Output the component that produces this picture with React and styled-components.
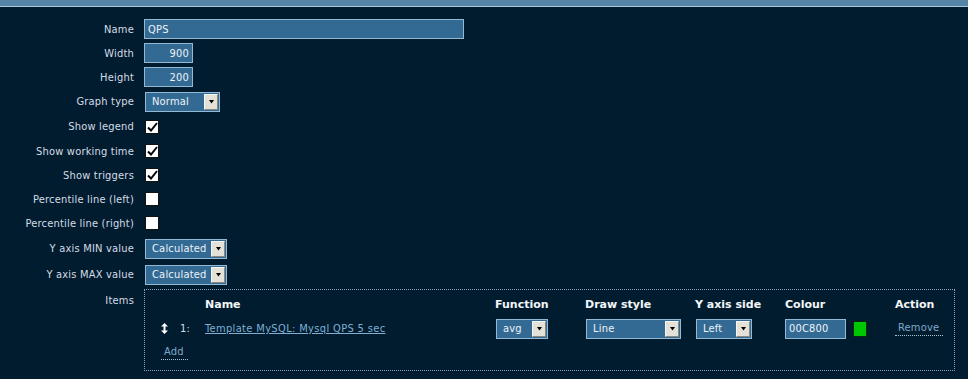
import styled, { createGlobalStyle } from "styled-components";

const GlobalStyle = createGlobalStyle`
  html, body {
    margin: 0;
    padding: 0;
    background: #021c2f;
  }
  body {
    font-family: "DejaVu Sans Condensed", "DejaVu Sans", Verdana, sans-serif;
    font-size: 11px;
    letter-spacing: 0.2px;
    color: #d3dde6;
  }
`;

const TopBar = styled.div`
  height: 6px;
  background: #5684a7;
  border-bottom: 1px solid #a7c9df;
`;

const Form = styled.div`
  display: flex;
  flex-direction: column;
  padding-top: 10px;
`;

const Row = styled.div`
  display: grid;
  grid-template-columns: 134px 1fr;
  column-gap: 10px;
  height: ${(p) => p.h || 24}px;
  align-items: ${(p) => (p.top ? "start" : "center")};
`;

const Label = styled.div`
  text-align: right;
  white-space: nowrap;
  padding-top: ${(p) => (p.top ? "7px" : "0")};
`;

const TextInput = styled.div`
  box-sizing: border-box;
  width: ${(p) => p.w}px;
  height: 20px;
  padding: 0 3px;
  display: flex;
  align-items: center;
  justify-content: ${(p) => (p.right ? "flex-end" : "flex-start")};
  background: #336a93;
  border: 1px solid #93b9d4;
  color: #eef3f7;
`;

const SelectBox = styled.div`
  box-sizing: border-box;
  width: ${(p) => p.w}px;
  height: 20px;
  margin-left: 1px;
  display: flex;
  align-items: center;
  background: #336a93;
  border: 1px solid #93b9d4;
  color: #eef3f7;
`;

const SelectText = styled.span`
  flex: 1;
  padding-left: 6px;
  white-space: nowrap;
`;

const SelectButton = styled.span`
  width: 14px;
  height: 16px;
  margin-right: 1px;
  display: flex;
  align-items: center;
  justify-content: center;
  background: #e4e1d9;
  border-left: 1px solid #f6f5f1;
  border-top: 1px solid #f6f5f1;
  border-right: 1px solid #8a877f;
  border-bottom: 1px solid #8a877f;
  box-sizing: border-box;
`;

const Check = styled.div`
  box-sizing: border-box;
  width: 14px;
  height: 14px;
  margin-left: 1px;
  background: #fff;
  border: 1px solid #111;
  display: flex;
  align-items: center;
  justify-content: center;
`;

const Items = styled.div`
  box-sizing: border-box;
  width: 811px;
  height: 82px;
  margin-top: 2px;
  border: 1px dotted #8aa3b8;
  padding-left: 16px;
`;

const ItemGrid = styled.div`
  display: grid;
  grid-template-columns: 19px 25px 290px 90px 110px 90px 110px 1fr;
  grid-template-rows: 27px 23px 24px;
  align-items: center;
`;

const Head = styled.div`
  font-family: "DejaVu Sans", Verdana, sans-serif;
  font-weight: bold;
  letter-spacing: 0;
  color: #f2f6f9;
  grid-column: ${(p) => p.col};
  padding-top: 2px;
`;

const Cell = styled.div`
  display: flex;
  align-items: center;
  white-space: nowrap;
  grid-column: ${(p) => p.col || "auto"};
`;

const ItemLink = styled.a`
  color: #7fb0d4;
  text-decoration: underline;
  letter-spacing: 0.35px;
`;

const DottedLink = styled.span`
  color: #7fa9c8;
  border-bottom: 1px dotted #a9c4d8;
  padding: 0 4px 1px 3px;
`;

const Swatch = styled.span`
  width: 12px;
  height: 14px;
  margin-left: 7px;
  background: #00c800;
  border: 1px solid #0a2a10;
`;

function Arrow() {
  return (
    <svg width="5" height="4" viewBox="0 0 5 4">
      <path d="M0 0h5L2.5 3.5z" fill="#000" />
    </svg>
  );
}

function Select({ w, value }) {
  return (
    <SelectBox w={w}>
      <SelectText>{value}</SelectText>
      <SelectButton>
        <Arrow />
      </SelectButton>
    </SelectBox>
  );
}

function Checkbox({ checked }) {
  return (
    <Check>
      {checked && (
        <svg width="11" height="10" viewBox="0 0 11 10">
          <path d="M1 5.5l3 3L10 1" fill="none" stroke="#000" strokeWidth="2" />
        </svg>
      )}
    </Check>
  );
}

function MoveIcon() {
  return (
    <svg width="7" height="11" viewBox="0 0 7 11">
      <path d="M3.5 0L7 3.5H4.5v4H7L3.5 11 0 7.5h2.5v-4H0z" fill="#fff" />
    </svg>
  );
}

const checkRows = [
  ["Show legend", true, 25],
  ["Show working time", true, 24],
  ["Show triggers", true, 24],
  ["Percentile line (left)", false, 24],
  ["Percentile line (right)", false, 24],
];

export default function App() {
  return (
    <>
      <GlobalStyle />
      <TopBar />
      <Form>
        <Row>
          <Label>Name</Label>
          <TextInput w={320}>QPS</TextInput>
        </Row>
        <Row>
          <Label>Width</Label>
          <TextInput w={49} right>900</TextInput>
        </Row>
        <Row>
          <Label>Height</Label>
          <TextInput w={49} right>200</TextInput>
        </Row>
        <Row h={25}>
          <Label>Graph type</Label>
          <Select w={75} value="Normal" />
        </Row>
        {checkRows.map(([label, checked, h]) => (
          <Row key={label} h={h}>
            <Label>{label}</Label>
            <Checkbox checked={checked} />
          </Row>
        ))}
        <Row h={27}>
          <Label>Y axis MIN value</Label>
          <Select w={82} value="Calculated" />
        </Row>
        <Row h={25}>
          <Label>Y axis MAX value</Label>
          <Select w={82} value="Calculated" />
        </Row>
        <Row h={86} top>
          <Label top>Items</Label>
          <Items>
            <ItemGrid>
              <Head col={3}>Name</Head>
              <Head col={4}>Function</Head>
              <Head col={5}>Draw style</Head>
              <Head col={6}>Y axis side</Head>
              <Head col={7}>Colour</Head>
              <Head col={8}>Action</Head>

              <Cell col={1}>
                <MoveIcon />
              </Cell>
              <Cell col={2}>1:</Cell>
              <Cell col={3}>
                <ItemLink href="#">Template MySQL: Mysql QPS 5 sec</ItemLink>
              </Cell>
              <Cell col={4}>
                <Select w={52} value="avg" />
              </Cell>
              <Cell col={5}>
                <Select w={95} value="Line" />
              </Cell>
              <Cell col={6}>
                <Select w={56} value="Left" />
              </Cell>
              <Cell col={7}>
                <TextInput w={61}>00C800</TextInput>
                <Swatch />
              </Cell>
              <Cell col={8}>
                <DottedLink>Remove</DottedLink>
              </Cell>

              <Cell col="1 / span 3">
                <DottedLink>Add</DottedLink>
              </Cell>
            </ItemGrid>
          </Items>
        </Row>
      </Form>
    </>
  );
}
